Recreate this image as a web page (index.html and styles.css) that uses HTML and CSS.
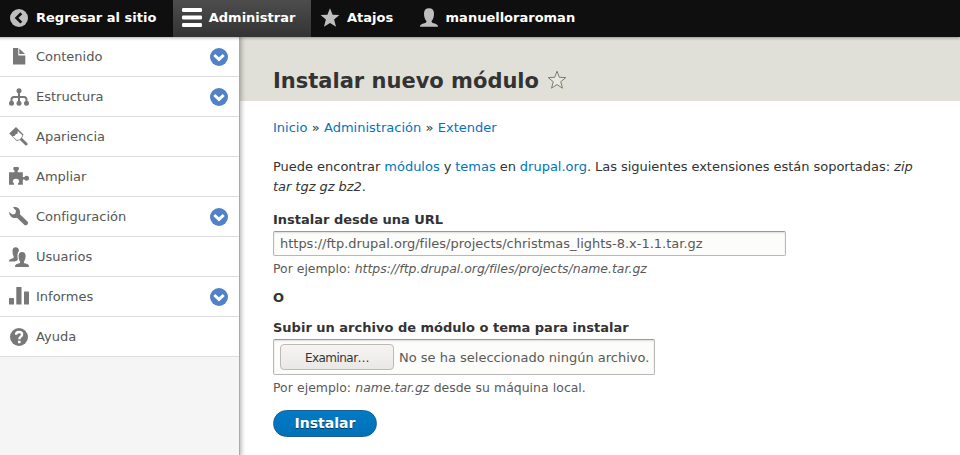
FILE: index.html
```html
<!DOCTYPE html>
<html lang="es">
<head>
<meta charset="utf-8">
<title>Instalar nuevo módulo</title>
<link rel="stylesheet" href="styles.css">
</head>
<body>
<svg class="defs" width="0" height="0">
  <symbol id="chevron" viewBox="0 0 20 20"><circle cx="10" cy="10" r="9" fill="#5181c6"/><path d="M5.300 8L10 12.400l4.700-4.400" fill="none" stroke="#fff" stroke-width="2.900"/></symbol>
  <symbol id="person" viewBox="0 0 20 20"><path d="M1 18.800c0-2.200 1.800-2.900 4.300-3.500 1.500-.4 2.300-.8 2.100-2.200C5.700 11.200 5 8.500 5 5.500 5 2 6.800.2 10 .2s5 1.800 5 5.300c0 3-.7 5.700-2.400 7.600-.2 1.400.6 1.800 2.100 2.200 2.500.6 4.300 1.300 4.300 3.500z"/></symbol>
</svg>
<nav class="toolbar">
  <a class="tab"><svg class="icon" viewBox="0 0 20 20"><circle cx="10" cy="10" r="9"/><path d="M12.300 5.200L7.600 9.900l4.700 4.700" fill="none" stroke="#0f0f0f" stroke-width="2.700"/></svg>Regresar al sitio</a>
  <a class="tab active"><svg class="icon" viewBox="0 0 20 20"><rect width="20" height="4" rx="1.300"/><rect y="7.500" width="20" height="4" rx="1.300"/><rect y="15" width="20" height="4" rx="1.300"/></svg>Administrar</a>
  <a class="tab"><svg class="icon" viewBox="0 0 20 20"><path d="M10 .2l2.600 6.500 6.800.4-5.300 4.500L16 18.800l-6-3.700-6 3.700 1.900-7.200L.6 7.100l6.800-.4z"/></svg>Atajos</a>
  <a class="tab"><svg class="icon"><use href="#person"/></svg>manuelloraroman</a>
</nav>
<div class="layout">
  <aside class="tray">
    <ul class="menu">
      <li><svg class="icon" viewBox="0 0 20 20"><path d="M4 1h5.300v7.500h7V17.500H4z"/><path d="M10.300 1.400l5.700 5.700h-5.700z"/></svg><span>Contenido</span><svg class="toggle"><use href="#chevron"/></svg></li>
      <li><svg class="icon" viewBox="0 0 20 20"><circle cx="10" cy="3.800" r="2.500"/><circle cx="2.500" cy="16.300" r="2.500"/><circle cx="10" cy="16.300" r="2.500"/><circle cx="17.500" cy="16.300" r="2.500"/><path d="M10 4v12M2.500 16v-3.500q0-2.500 2.500-2.500h10q2.500 0 2.500 2.500V16" fill="none" stroke="#787878" stroke-width="2"/></svg><span>Estructura</span><svg class="toggle"><use href="#chevron"/></svg></li>
      <li><svg class="icon" viewBox="0 0 20 20"><path d="M7 0l7.500 7.500-1.500 3.500 5.400 5.300c1 1.200-.8 3-2.100 2L11 12.900l-3.300 1L.2 6.600z"/><path d="M8.700 3.900l4.700 4.400-.9 2.200-1.900 1.900-2.900.7-4.300-4.200 2.200.2 1.400-2.200 1.600-.2z" fill="#fff"/></svg><span>Apariencia</span></li>
      <li><svg class="icon" viewBox="0 0 20 20"><path d="M0 5.300h5.200c.7-.7.600-1.500-.2-2.100-1-.7-1-3.200 0-3.200h4.200c1 0 1 2.500 0 3.200-.8.600-.9 1.400-.2 2.100h4.800v4.400c.7.900 1.500.7 2.100-.1.600-1.200 4.100-1.300 4.100 1.700s-3.400 2.900-4.100 1.700c-.6-.8-1.400-1-2.100-.1v4.800H9v-1.300c2-1 1.600-4.600-2-4.600s-4 3.600-2 4.600v1.300H0z"/></svg><span>Ampliar</span></li>
      <li><svg class="icon" viewBox="0 0 20 20"><path d="M4 .5c3-1.300 7.300.8 7.100 5l-.2 1.700 7.600 7.400c1.700 2-1 4.800-3 3.300l-7.600-7.200C4.200 11.700.2 9.500 0 4.900l3.500 2.700 2.700-.9.900-3z"/></svg><span>Configuración</span><svg class="toggle"><use href="#chevron"/></svg></li>
      <li><svg class="icon" viewBox="0 0 20 20"><path d="M0 14.600c0-2 1.200-2.500 3-3 1.500-.4 1.900-.8 1.700-2C3.800 7.800 3.500 6 3.500 4.200 3.500 1.700 4.500.2 6.700.2s3.300 1.500 3.300 3.800C8.300 6 8.200 9 8.700 11.400c.3 1.400-.3 2.300-1.600 2.700l-1.500.5z"/><path d="M6 20c0-2.100 1.200-2.900 3.300-3.400 1.700-.4 2-.8 1.700-2.100C9.900 13 9.600 11 9.600 9.100c0-2.600 1.200-4.100 3.500-4.100s3.500 1.500 3.500 4.100c0 1.900-.4 3.900-1.600 5.400-.3 1.300 0 1.700 1.700 2.100 2.100.5 3.300 1.300 3.300 3.400z"/></svg><span>Usuarios</span></li>
      <li><svg class="icon" viewBox="0 0 20 20"><rect y="11" width="5" height="6.500" rx=".5"/><rect x="7.300" width="5.200" height="17.500" rx=".5"/><rect x="15" y="4.500" width="5" height="13" rx=".5"/></svg><span>Informes</span><svg class="toggle"><use href="#chevron"/></svg></li>
      <li><svg class="icon" viewBox="0 0 20 20"><circle cx="10" cy="10" r="9"/><path d="M7 7.800C7 5.900 8.200 5 10 5s3.100.8 3.100 2.400c0 2.400-2.800 2.200-2.800 4.800" fill="none" stroke="#fff" stroke-width="2.400"/><rect x="9" y="13.700" width="2.600" height="2.500" fill="#fff"/></svg><span>Ayuda</span></li>
    </ul>
  </aside>
  <main class="page">
    <header class="page-header">
      <h1>Instalar nuevo módulo</h1>
      <svg class="shortcut" viewBox="0 0 20 20"><path d="M10 1.200l2.300 6.100 6.500.3-5.100 4.100 1.800 6.500L10 14.600l-5.500 3.600 1.800-6.500-5.100-4.100 6.500-.3z"/></svg>
    </header>
    <div class="content">
      <nav class="breadcrumb"><a>Inicio</a> » <a>Administración</a> » <a>Extender</a></nav>
      <p class="intro">Puede encontrar <a>módulos</a> y <a>temas</a> en <a>drupal.org</a>. Las siguientes extensiones están soportadas: <em>zip tar tgz gz bz2</em>.</p>
      <form>
        <label for="url">Instalar desde una URL</label>
        <input class="field url" id="url" type="text" value="https://ftp.drupal.org/files/projects/christmas_lights-8.x-1.1.tar.gz">
        <div class="description">Por ejemplo: <em>https://ftp.drupal.org/files/projects/name.tar.gz</em></div>
        <div class="or">O</div>
        <div class="label">Subir un archivo de módulo o tema para instalar</div>
        <div class="field file"><span class="browse">Examinar…</span><span class="file-name">No se ha seleccionado ningún archivo.</span></div>
        <div class="description local">Por ejemplo: <em>name.tar.gz</em> desde su máquina local.</div>
        <button class="submit" type="button">Instalar</button>
      </form>
    </div>
  </main>
</div>
</body>
</html>
```

FILE: styles.css
```css
* { box-sizing: border-box; }
body {
  margin: 0;
  height: 455px;
  overflow: hidden;
  background: #fff;
  color: #333;
  font: 13px/20px "DejaVu Sans", sans-serif;
}
.defs { display: block; height: 0; }
a { color: #0074bd; }
.toolbar {
  position: relative;
  z-index: 2;
  display: flex;
  height: 37px;
  background: #0f0f0f;
  box-shadow: -1px 0 3px 1px rgba(0, 0, 0, .3333);
}
.tab {
  display: flex;
  gap: 7px;
  padding: 8px 16.4px 0 9px;
  color: #fff;
  font-weight: bold;
  white-space: nowrap;
}
.icon { flex: none; width: 20px; height: 20px; fill: #bebebe; }
.active { padding-right: 15.6px; background: linear-gradient(#4d4d4d, #333); }
.active .icon { fill: #fff; }
.layout { display: flex; height: 418px; }
.tray {
  position: relative;
  z-index: 1;
  flex: none;
  width: 240px;
  background: #f5f5f5;
  border-right: 1px solid #aaa;
  box-shadow: -1px 0 5px 2px rgba(0, 0, 0, .3333);
}
.menu { margin: 0; padding: 0; list-style: none; }
.menu li {
  display: flex;
  align-items: center;
  gap: 7px;
  height: 40px;
  padding: 1px 10px 0 9px;
  background: #fff;
  border-bottom: 1px solid #ddd;
  color: #565656;
}
.menu .icon { fill: #787878; }
.toggle { width: 20px; height: 20px; margin-left: auto; }
.page { flex: 1; }
.page-header {
  display: flex;
  gap: 8px;
  height: 64px;
  padding: 30px 33px 0;
  background: #e0e0d8;
}
h1 { margin: 0; font-size: 21px; line-height: 28px; }
.shortcut {
  width: 20px;
  height: 20px;
  margin-top: 3px;
  fill: #e8e8e1;
  stroke: #7d7d69;
  stroke-width: 1;
}
.content { padding: 17px 40px 0 33px; }
.breadcrumb { word-spacing: .2px; }
.intro { margin: 19px 0 13px; word-spacing: -.22px; }
form { display: block; }
label, .label { display: block; font-weight: bold; }
.field {
  border: 1px solid #b8b8b8;
  border-top-color: #999;
  border-radius: 2px;
  background: #fcfcfa;
  box-shadow: inset 0 1px 2px rgba(0, 0, 0, .125);
  color: #595959;
}
.url {
  display: block;
  width: 513px;
  height: 25px;
  margin-top: 1px;
  padding: 0 6px;
  font: 12.97px "DejaVu Sans", sans-serif;
}
.description { margin-top: 3px; color: #595959; font-size: 12.45px; }
.local { word-spacing: .3px; }
.or { margin: 9px 0 10px; font-weight: bold; }
.file {
  display: flex;
  align-items: center;
  gap: 5px;
  width: 382px;
  height: 36px;
  margin-top: 1px;
  padding: 0 6px;
  white-space: nowrap;
}
.file-name { padding-top: 2px; }
.browse {
  flex: none;
  width: 114px;
  height: 26px;
  border: 1px solid #c0b8b4;
  border-radius: 4px;
  background: linear-gradient(#f5f4f3, #e9e8e6);
  color: #333;
  font-size: 12px;
  letter-spacing: -.55px;
  line-height: 26px;
  text-align: center;
}
.submit {
  display: block;
  width: 104px;
  height: 27px;
  margin-top: 12px;
  padding: 0 0 2px;
  border: 1px solid #1e5c90;
  border-radius: 14px;
  background: linear-gradient(#007bc6, #0071b8);
  color: #fff;
  font: bold 14px "DejaVu Sans", sans-serif;
  text-shadow: 0 1px rgba(0, 0, 0, .5);
}
```
